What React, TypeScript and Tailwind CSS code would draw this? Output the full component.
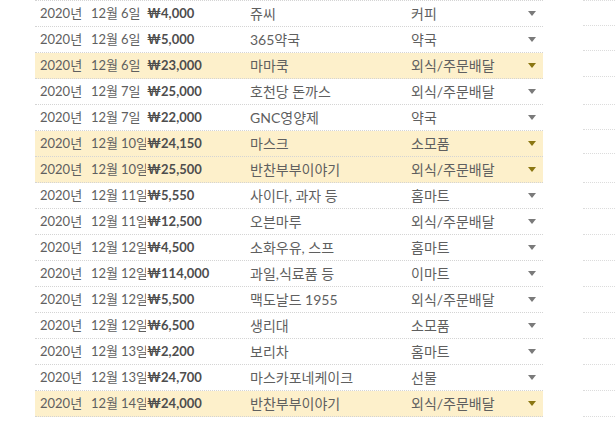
const rows = [
  { m: '12월', d: '6일', amount: '₩4,000', store: '쥬씨', cat: '커피' },
  { m: '12월', d: '6일', amount: '₩5,000', store: '365약국', cat: '약국' },
  { m: '12월', d: '6일', amount: '₩23,000', store: '마마쿡', cat: '외식/주문배달', hl: true },
  { m: '12월', d: '7일', amount: '₩25,000', store: '호천당 돈까스', cat: '외식/주문배달' },
  { m: '12월', d: '7일', amount: '₩22,000', store: 'GNC영양제', cat: '약국' },
  { m: '12월', d: '10일', amount: '₩24,150', store: '마스크', cat: '소모품', hl: true },
  { m: '12월', d: '10일', amount: '₩25,500', store: '반찬부부이야기', cat: '외식/주문배달', hl: true },
  { m: '12월', d: '11일', amount: '₩5,550', store: '사이다, 과자 등', cat: '홈마트' },
  { m: '12월', d: '11일', amount: '₩12,500', store: '오븐마루', cat: '외식/주문배달' },
  { m: '12월', d: '12일', amount: '₩4,500', store: '소화우유, 스프', cat: '홈마트' },
  { m: '12월', d: '12일', amount: '₩114,000', store: '과일,식료품 등', cat: '이마트' },
  { m: '12월', d: '12일', amount: '₩5,500', store: '맥도날드 1955', cat: '외식/주문배달' },
  { m: '12월', d: '12일', amount: '₩6,500', store: '생리대', cat: '소모품' },
  { m: '12월', d: '13일', amount: '₩2,200', store: '보리차', cat: '홈마트' },
  { m: '12월', d: '13일', amount: '₩24,700', store: '마스카포네케이크', cat: '선물' },
  { m: '12월', d: '14일', amount: '₩24,000', store: '반찬부부이야기', cat: '외식/주문배달', hl: true },
];

// dotted lines of the next column, they don't line up with the rows
const sideLines = [0, 25, 50, 76, 104, 129, 153, 182, 208, 234, 260, 286, 312, 338, 364, 390, 416];

const font = { fontFamily: 'Lato, "Noto Sans CJK KR", sans-serif' };

export default function App() {
  return (
    <div className="w-[615px] h-[421px] bg-white overflow-hidden flex" style={font}>
      <div className="w-[35px]" />
      <div className="w-[508px] flex flex-col">
        <div className="h-px border-b border-dotted border-[#d4d4d4]" />
        {rows.map((r, i) => (
          <div
            key={i}
            className={`h-[26px] flex items-center border-b border-dotted border-[#d4d4d4] text-[14px] text-[#5f5f5f] ${r.hl ? 'bg-[#fdf0cb]' : ''}`}
          >
            <div className="w-[111px] pl-[5px] overflow-hidden whitespace-nowrap text-[13px] flex">
              <span className="w-[51px] shrink-0">2020년</span>
              <span className="w-[30px] shrink-0">{r.m}</span>
              <span className="shrink-0">{r.d}</span>
            </div>
            <div className="w-[99px] pl-[1px] font-bold text-[13px] text-[#4d4d4d] whitespace-nowrap">{r.amount}</div>
            <div className="w-[166px] pl-[5px] whitespace-nowrap">{r.store}</div>
            <div className="w-[112px] whitespace-nowrap">{r.cat}</div>
            <svg width="8" height="5" viewBox="0 0 8 5" className="ml-[5px]">
              <path d="M0 0h8L4 5z" fill={r.hl ? '#8a7612' : '#7a7a7a'} />
            </svg>
          </div>
        ))}
      </div>
      <div className="w-[40px]" />
      <div className="flex-1 flex flex-col">
        {sideLines.map((y, i) => (
          <div
            key={y}
            className="border-t border-dotted border-[#dcdcdc]"
            style={{ height: (sideLines[i + 1] ?? 421) - y }}
          />
        ))}
      </div>
    </div>
  );
}
